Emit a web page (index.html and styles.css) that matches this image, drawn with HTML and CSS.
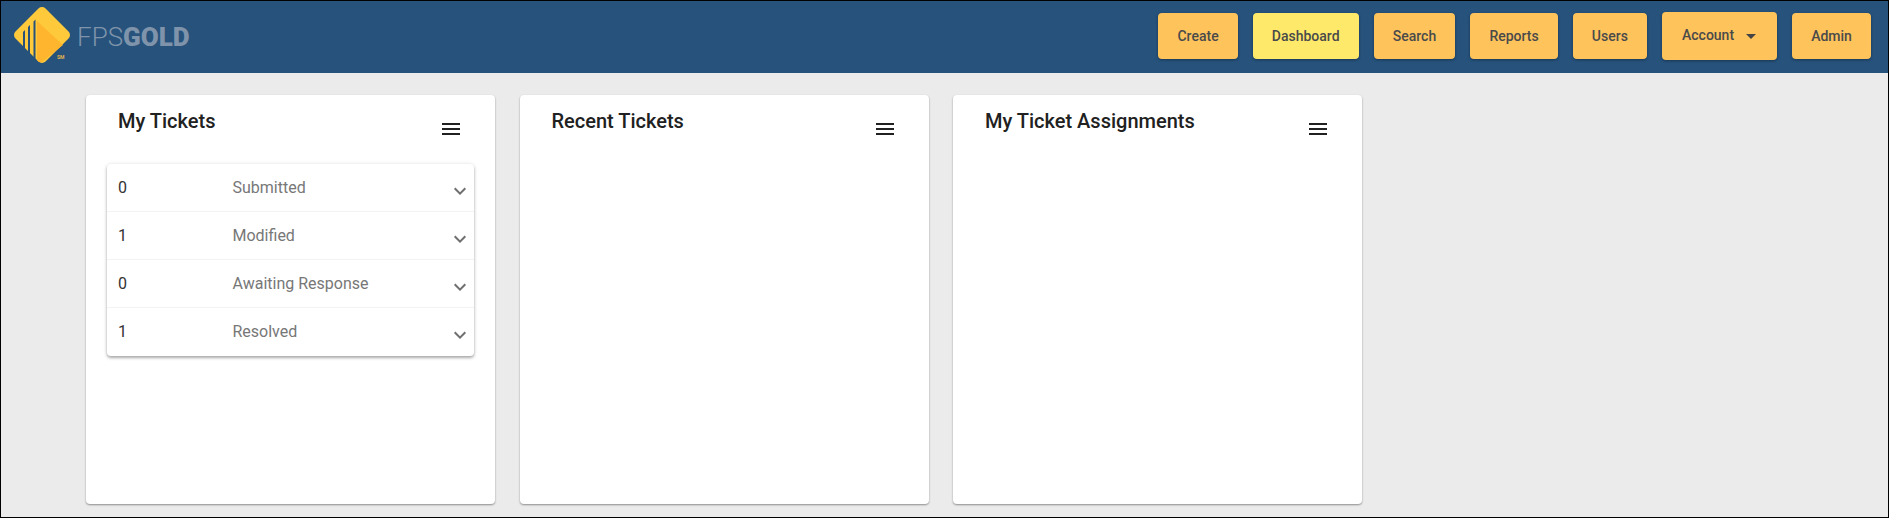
FILE: index.html
```html
<!DOCTYPE html>
<html lang="en">
<head>
<meta charset="utf-8">
<title>FPS GOLD Dashboard</title>
<link rel="stylesheet" href="styles.css">
</head>
<body>
<div class="page">
  <header class="topbar">
    <div class="brand">
      <svg class="logo" width="56" height="56" viewBox="0 0 56 56" aria-hidden="true">
        <rect x="6.75" y="6.75" width="42.5" height="42.5" rx="5" transform="rotate(45 28 28)" fill="#ffc93c"/>
        <path d="M23 14 L49 38 L28 55 Q25 56 23 53 Z" fill="#ffb62e"/>
        <path d="M9 25 L11 23 V46 H9 Z M14 20 L16 18 V51 H14 Z M19.5 14.5 L21.5 12.5 V56 H19.5 Z" fill="#26527c"/>
      </svg>
      <span class="sm">SM</span>
      <span class="wordmark">FPS<b>GOLD</b></span>
    </div>
    <nav class="nav">
      <a class="btn">Create</a>
      <a class="btn active">Dashboard</a>
      <a class="btn">Search</a>
      <a class="btn">Reports</a>
      <a class="btn">Users</a>
      <a class="btn account">Account<i class="caret"></i></a>
      <a class="btn">Admin</a>
    </nav>
  </header>
  <main class="cards">
    <section class="card">
      <div class="card-head">
        <h2>My Tickets</h2>
        <svg class="menu" width="24" height="24" viewBox="0 0 24 24" aria-hidden="true"><path d="M3 18h18v-2H3v2zm0-5h18v-2H3v2zm0-7v2h18V6H3z"/></svg>
      </div>
      <ul class="list">
        <li class="row"><span class="count">0</span><span class="label">Submitted</span><svg class="chev" width="24" height="24" viewBox="0 0 24 24" aria-hidden="true"><path d="M16.59 8.59L12 13.17 7.41 8.59 6 10l6 6 6-6z"/></svg></li>
        <li class="row"><span class="count">1</span><span class="label">Modified</span><svg class="chev" width="24" height="24" viewBox="0 0 24 24" aria-hidden="true"><path d="M16.59 8.59L12 13.17 7.41 8.59 6 10l6 6 6-6z"/></svg></li>
        <li class="row"><span class="count">0</span><span class="label">Awaiting Response</span><svg class="chev" width="24" height="24" viewBox="0 0 24 24" aria-hidden="true"><path d="M16.59 8.59L12 13.17 7.41 8.59 6 10l6 6 6-6z"/></svg></li>
        <li class="row"><span class="count">1</span><span class="label">Resolved</span><svg class="chev" width="24" height="24" viewBox="0 0 24 24" aria-hidden="true"><path d="M16.59 8.59L12 13.17 7.41 8.59 6 10l6 6 6-6z"/></svg></li>
      </ul>
    </section>
    <section class="card">
      <div class="card-head">
        <h2>Recent Tickets</h2>
        <svg class="menu" width="24" height="24" viewBox="0 0 24 24" aria-hidden="true"><path d="M3 18h18v-2H3v2zm0-5h18v-2H3v2zm0-7v2h18V6H3z"/></svg>
      </div>
    </section>
    <section class="card">
      <div class="card-head">
        <h2>My Ticket Assignments</h2>
        <svg class="menu" width="24" height="24" viewBox="0 0 24 24" aria-hidden="true"><path d="M3 18h18v-2H3v2zm0-5h18v-2H3v2zm0-7v2h18V6H3z"/></svg>
      </div>
    </section>
  </main>
</div>
</body>
</html>
```
FILE: styles.css
```css
* { box-sizing: border-box; }
html, body { margin: 0; padding: 0; }
body { font-family: Roboto, "Liberation Sans", sans-serif; background: #ebebeb; overflow: hidden; }
.page { width: 1889px; height: 518px; border: 1px solid #000; background: #ebebeb; }
.topbar { height: 72px; background: #26527c; display: flex; align-items: center; justify-content: space-between; padding: 0 17px 0 13px; }
.brand { position: relative; display: flex; align-items: center; height: 72px; }
.logo { display: block; margin-top: -4px; }
.sm { position: absolute; left: 43px; top: 54px; font-size: 5px; font-weight: 700; color: #e3b24f; line-height: 5px; }
.wordmark { margin-left: 7px; font-size: 26px; font-weight: 300; color: #7f94aa; margin-top: -1px; }
.wordmark b { font-weight: 900; color: #7f94aa; }
.nav { display: flex; align-items: center; gap: 15px; margin-top: -2px; }
.btn { display: flex; align-items: center; justify-content: center; height: 46px; padding: 0 19.1px; background: #ffc35c; color: #4a4a4a; border-radius: 4px; font-size: 14px; font-weight: 500; box-shadow: 0 1px 3px rgba(0,0,0,.35); }
.btn.active { background: #ffe96b; }
.btn.account { height: 48px; padding: 0 21px 3px 20px; }
.caret { display: inline-block; width: 0; height: 0; margin-left: 12px; margin-top: 3px; border-left: 5px solid transparent; border-right: 5px solid transparent; border-top: 5px solid #444; }
.cards { display: grid; grid-template-columns: repeat(3, 409px); column-gap: 24.5px; padding: 22px 0 0 85px; }
.card { height: 409px; background: #fff; border-radius: 4px; box-shadow: 0 1px 2px rgba(0,0,0,.4); }
.card-head { display: flex; justify-content: space-between; padding: 12px 32px 0 32px; height: 69px; }
.card-head h2 { margin: 0; font-size: 20px; line-height: 28px; font-weight: 500; color: #212121; }
.menu { display: block; margin-top: 10px; fill: #212121; }
.list { list-style: none; margin: 0 21px; padding: 0 0 1px; border-radius: 4px; background: #fff; box-shadow: 0 2px 3px rgba(0,0,0,.3), 0 0 4px rgba(0,0,0,.1); }
.row { display: flex; align-items: center; position: relative; height: 48px; font-size: 16px; border-bottom: 1px solid #f3f3f3; padding-left: 11px; }
.row:last-child { border-bottom: 0; height: 47px; }
.count { width: 114.5px; color: #333; }
.label { color: #777; }
.chev { position: absolute; right: 2px; top: 15px; fill: #6f6f6f; }
```
